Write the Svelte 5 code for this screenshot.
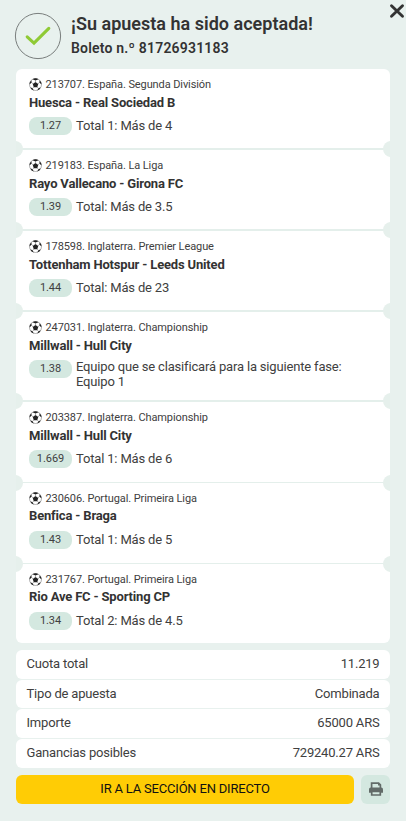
<script>
  const bets = [
    { league: '213707. España. Segunda División', match: 'Huesca - Real Sociedad B', odd: '1.27', pick: 'Total 1: Más de 4', h: 81 },
    { league: '219183. España. La Liga', match: 'Rayo Vallecano - Girona FC', odd: '1.39', pick: 'Total: Más de 3.5', h: 81 },
    { league: '178598. Inglaterra. Premier League', match: 'Tottenham Hotspur - Leeds United', odd: '1.44', pick: 'Total: Más de 23', h: 81 },
    { league: '247031. Inglaterra. Championship', match: 'Millwall - Hull City', odd: '1.38', pick: 'Equipo que se clasificará para la siguiente fase: Equipo 1', h: 90 },
    { league: '203387. Inglaterra. Championship', match: 'Millwall - Hull City', odd: '1.669', pick: 'Total 1: Más de 6', h: 80.8, thin: true },
    { league: '230606. Portugal. Primeira Liga', match: 'Benfica - Braga', odd: '1.43', pick: 'Total 1: Más de 5', h: 80.8, thin: true },
    { league: '231767. Portugal. Primeira Liga', match: 'Rio Ave FC - Sporting CP', odd: '1.34', pick: 'Total 2: Más de 4.5', h: 79.4 }
  ];
  const totals = [
    ['Cuota total', '11.219'],
    ['Tipo de apuesta', 'Combinada'],
    ['Importe', '65000 ARS'],
    ['Ganancias posibles', '729240.27 ARS']
  ];
</script>

<main>
  <button class="close" aria-label="Cerrar">
    <svg width="16" height="16" viewBox="0 0 16 16"><path d="M2.5 2.7 13.5 13.3M13.5 2.7 2.5 13.3" fill="none" stroke="#333" stroke-width="2.9" stroke-linecap="round" /></svg>
  </button>

  <header>
    <svg class="ok" width="48" height="48" viewBox="0 0 48 48">
      <circle cx="24" cy="24" r="22.6" fill="none" stroke="#6c716f" stroke-width="0.9" />
      <path d="M13.2 24.8 20 31.2 34.8 16.4" fill="none" stroke="#8fca35" stroke-width="3.1" stroke-linecap="round" />
    </svg>
    <div>
      <h1>¡Su apuesta ha sido aceptada!</h1>
      <h2>Boleto n.º 81726931183</h2>
    </div>
  </header>

  <section class="bets">
    {#each bets as bet}
      <article class:thin={bet.thin} style="height: {bet.h}px">
        <div class="league">
          <svg width="13" height="13" viewBox="0 0 26 26">
            <circle cx="13" cy="13" r="12" fill="#fff" stroke="#888" stroke-width="1.3" />
            <path d="M13 8 18.5 12 16.5 18.5H9.5L7.5 12ZM7 2.4Q13-1 19 2.4L13 5ZM.8 13Q1 8 4.5 4.5L5.5 9ZM25.2 13Q25 8 21.5 4.5L20.5 9ZM2.5 19 7 20 9.5 25Q4.5 23.5 2.5 19ZM23.5 19 19 20 16.5 25Q21.5 23.5 23.5 19Z" fill="#222" />
            <path d="M13 4.5V9M5 8.5 8 12M21 8.5 18 12M7 20.5 9.9 18M19 20.5 16.1 18" stroke="#777" stroke-width="1.2" />
          </svg>
          <span>{bet.league}</span>
        </div>
        <div class="match">{bet.match}</div>
        <div class="pick" class:long={bet.pick.length > 30}>
          <span class="odd">{bet.odd}</span>
          <span class="text">{bet.pick}</span>
        </div>
      </article>
    {/each}
  </section>

  <section class="totals">
    {#each totals as [label, value]}
      <div class="row"><span>{label}</span><span>{value}</span></div>
    {/each}
  </section>

  <footer>
    <button class="live">IR A LA SECCIÓN EN DIRECTO</button>
    <button class="print" aria-label="Imprimir">
      <svg width="14" height="14" viewBox="0 0 14 14">
        <path d="M2.6 6V1.1H9.6L11.4 2.9V6" fill="none" stroke="#626b68" stroke-width="1.7" />
        <path d="M9 .7V3.5H11.8Z" fill="#626b68" />
        <path d="M1.8 5.5H12.2Q14 5.5 14 7.3V10.8H0V7.3Q0 5.5 1.8 5.5Z" fill="#626b68" />
        <path d="M2.7 9.3H11.3V13H2.7Z" fill="#d4e8e0" stroke="#626b68" stroke-width="1.7" />
      </svg>
    </button>
  </footer>
</main>

<style>
  :global(body) { background: #e8f1ee; }
  main {
    position: relative;
    box-sizing: border-box;
    width: 406px;
    height: 821px;
    padding: 12px 16px 0;
    overflow: hidden;
    background: #e8f1ee;
    color: #333;
    font-family: Roboto, "Liberation Sans", sans-serif;
  }
  button { border: 0; padding: 0; font: inherit; }
  svg { display: block; flex: none; }
  .close { position: absolute; top: 3px; left: 389px; background: none; }
  header { display: flex; height: 57px; }
  .ok { margin-left: -2px; }
  header div { padding-left: 9px; }
  h1, h2 { margin: 0; white-space: nowrap; }
  h1 { font-size: 18px; line-height: 24px; font-weight: 600; letter-spacing: 0.01px; }
  h2 { font-size: 14px; line-height: 24px; font-weight: 600; letter-spacing: 0.2px; }
  .bets { border-radius: 6px; background: #fff; overflow: hidden; }
  article { position: relative; box-sizing: border-box; padding: 7px 13px 0; }
  article:not(:last-child) { border-bottom: 2px solid #e4efeb; }
  article.thin:not(:last-child) { border-bottom-width: 1px; }
  article:not(:last-child)::before,
  article:not(:last-child)::after {
    content: "";
    position: absolute;
    bottom: -9px;
    z-index: 1;
    width: 16px;
    height: 16px;
    border-radius: 50%;
    background: #e6f0ec;
  }
  article::before { left: -9px; }
  article::after { right: -9px; }
  .league { display: flex; align-items: center; gap: 3.5px; height: 16px; margin-bottom: 0.6px; font-size: 11px; line-height: 16px; white-space: nowrap; letter-spacing: -0.1px; color: #404040; }
  .league svg { margin-top: 1px; }
  .league span { margin-top: 2px; }
  .match { height: 20.4px; font-size: 13px; line-height: 20px; font-weight: 700; white-space: nowrap; letter-spacing: -0.17px; }
  .pick { display: flex; gap: 4px; padding-top: 4px; font-size: 13px; line-height: 18px; letter-spacing: -0.17px; color: #404040; }
  .odd { flex: none; width: 43px; height: 18px; border-radius: 8px; background: #d4e8e0; font-size: 11px; line-height: 17px; text-align: center; letter-spacing: -0.05px; }
  .long .text { width: 280px; line-height: 15px; margin-top: -1px; }
  .totals { display: flex; flex-direction: column; gap: 0.8px; margin-top: 7px; }
  .row { display: flex; justify-content: space-between; height: 28.8px; padding: 0 10.5px; border-radius: 6px; background: #fff; font-size: 13px; line-height: 28px; letter-spacing: -0.19px; color: #404040; }
  footer { display: flex; gap: 7px; margin-top: 7px; }
  .live { width: 338px; height: 29px; padding-bottom: 2px; border-radius: 6px; background: #ffcc05; color: #111; font-size: 13px; letter-spacing: -0.2px; }
  .print { display: flex; align-items: center; justify-content: center; width: 29px; height: 29px; border-radius: 6px; background: #d4e8e0; }
</style>
